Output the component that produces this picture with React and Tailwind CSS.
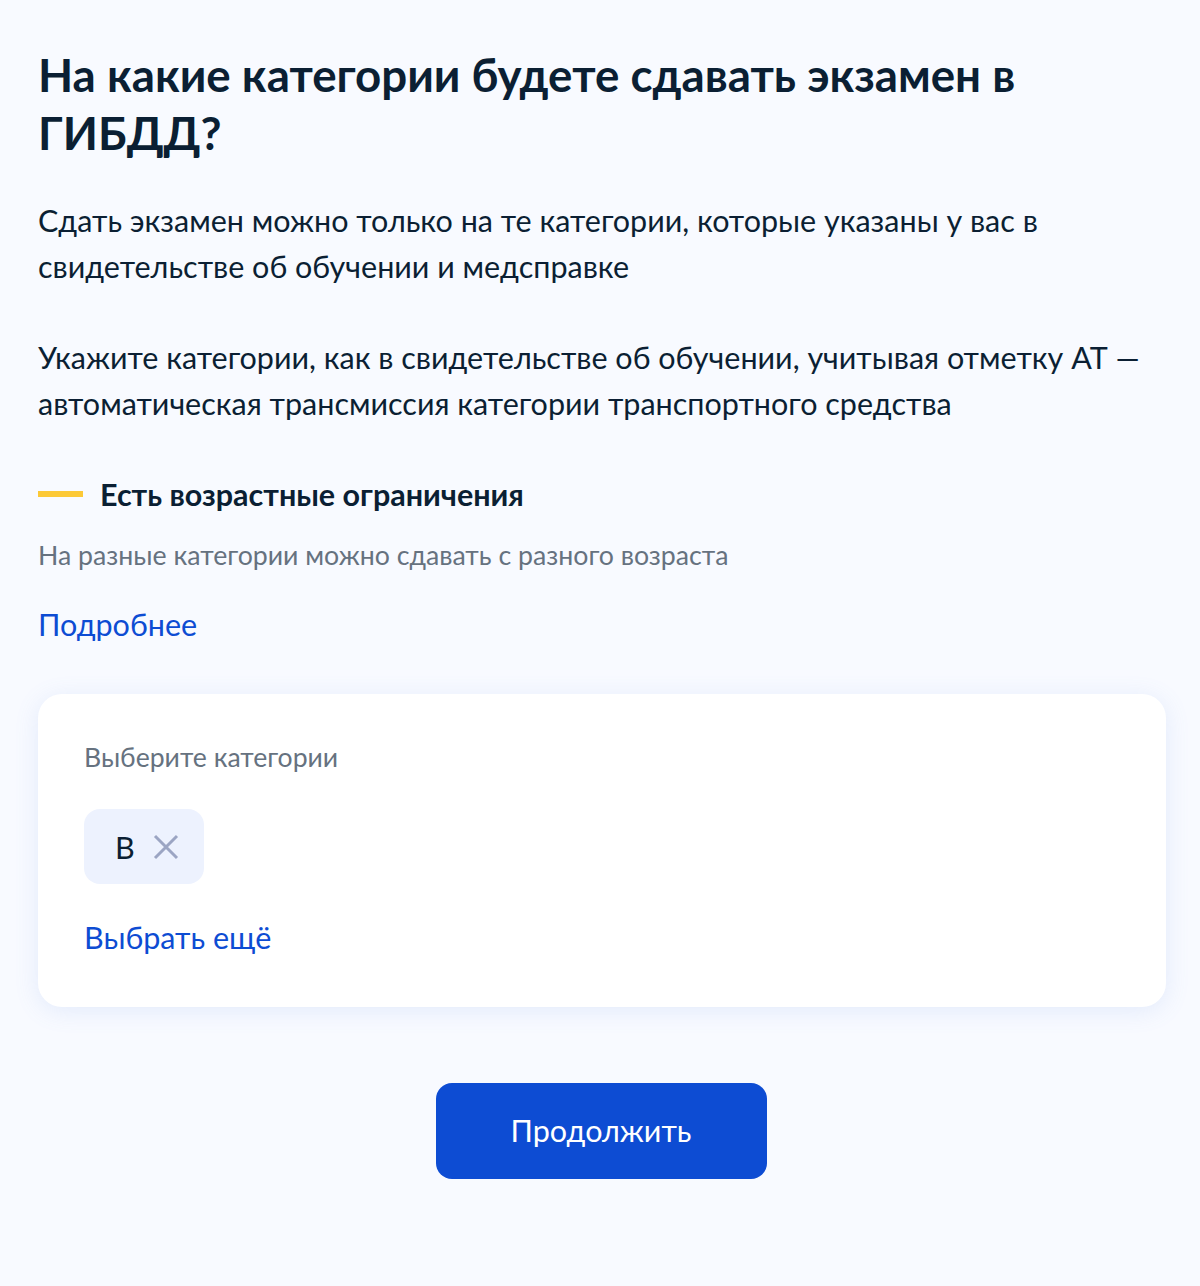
export default function App() {
  return (
    <div className="min-h-[1286px] w-full bg-[#f8faff] text-[#0b1f33]" style={{ fontFamily: "Lato, 'Noto Sans', sans-serif" }}>
      <div className="px-[38px] pt-[46px]">
        <h1 className="text-[45.7px] font-bold leading-[58px]">
          На какие категории будете сдавать экзамен в ГИБДД?
        </h1>
        <div className="mt-[35px] text-[30.5px] leading-[46px]">
          <p>Сдать экзамен можно только на те категории, которые указаны у вас в свидетельстве об обучении и медсправке</p>
          <p className="mt-[45px]">Укажите категории, как в свидетельстве об обучении, учитывая отметку АТ — автоматическая трансмиссия категории транспортного средства</p>
        </div>
        <div className="mt-[48px] flex items-center gap-[17px]">
          <div className="h-[6px] w-[45px] bg-[#fcc937]" />
          <div className="text-[30.5px] font-bold leading-[40px]">Есть возрастные ограничения</div>
        </div>
        <p className="mt-[23px] text-[26.7px] leading-[36px] text-[#66727f]">На разные категории можно сдавать с разного возраста</p>
        <div className="mt-[31px] text-[30.5px] leading-[40px] text-[#0d4cd3]">Подробнее</div>
        <div className="mr-[-4px] mt-[50px] rounded-[24px] bg-white px-[46px] pt-[45px] pb-[50px] shadow-[0_4px_24px_rgba(102,139,230,0.14)]">
          <div className="text-[26.6px] leading-[36px] text-[#66727f]">Выберите категории</div>
          <div className="mt-[34px] flex">
            <div className="flex h-[75px] items-center gap-[18px] rounded-[16px] bg-[#edf2fe] pl-[31px] pr-[25px]">
              <span className="text-[30.5px] leading-[36px]">B</span>
              <svg width="26" height="26" viewBox="0 0 26 26" fill="none" stroke="#9ba5c3" strokeWidth="3" strokeLinecap="butt">
                <path d="M2 2L24 24M24 2L2 24" />
              </svg>
            </div>
          </div>
          <div className="mt-[33px] text-[30.5px] leading-[40px] text-[#0d4cd3]">Выбрать ещё</div>
        </div>
        <div className="mt-[76px] flex justify-center pl-[2px]">
          <button className="h-[96px] w-[331px] rounded-[16px] bg-[#0d4cd3] text-[30.5px] text-white">Продолжить</button>
        </div>
      </div>
    </div>
  );
}
